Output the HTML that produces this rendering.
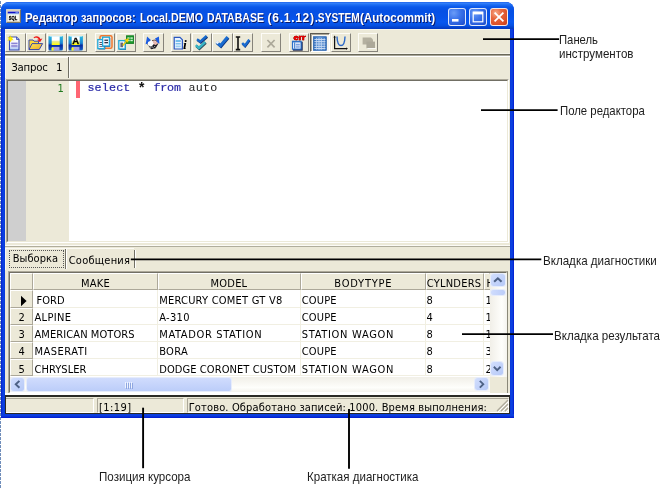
<!DOCTYPE html>
<html lang="ru"><head><meta charset="utf-8"><title>Редактор запросов</title>
<style>
html,body{margin:0;padding:0;background:#fff;}
body{width:662px;height:488px;position:relative;overflow:hidden;font-family:"DejaVu Sans Condensed","Liberation Sans",sans-serif;}
.r{position:absolute;display:block;}
.t{position:absolute;white-space:pre;line-height:0;}
#root{position:absolute;left:0;top:0;width:662px;height:488px;will-change:transform;}
</style></head><body><div id="root">
<div class="r" style="left:0px;top:0px;width:1px;height:488px;background:repeating-linear-gradient(to bottom,#fff 0 1px,#6f8dba 1px 4px);"></div>
<div class="r" style="left:1px;top:2px;width:513px;height:415.5px;background:#0a38d6;border-radius:8px 8px 0 0;background:linear-gradient(to right,#0019cf 0,#0831d9 1px,#0c44e2 2px,#0838da 4px,#0838da calc(100% - 4px),#0c44e2 calc(100% - 2px),#0831d9 calc(100% - 1px),#0019cf 100%);"></div>
<div class="r" style="left:1px;top:414px;width:513px;height:3.5px;background:linear-gradient(to bottom,#0838da 0,#0c44e2 1px,#0831d9 2.5px,#0019cf 100%)"></div>
<div class="r" style="left:1px;top:2px;width:513px;height:27px;border-radius:8px 8px 0 0;background:linear-gradient(to bottom,#1358ea 0,#3a84f8 1px,#2070f4 2.5px,#0a58ea 5px,#0650e4 9px,#0652e8 15px,#0858f0 20px,#0650e2 23.5px,#0442cc 25.5px,#0338c0 27px);"></div>
<div class="r" style="left:5px;top:29px;width:505px;height:385px;background:#ece9d8;"></div>
<div class="r" style="left:5px;top:29px;width:505px;height:1px;background:#f7f5ea;"></div>
<svg class="r" style="left:6px;top:9px" width="15" height="14" viewBox="0 0 15 14"><rect x=".5" y=".3" width="14" height="13.2" fill="#d8d0b8"/><path d="M14.5 .3 V13.5 H.5" fill="none" stroke="#7c7464" stroke-width="1"/><path d="M.5 13.5 V.3 H14.5" fill="none" stroke="#e8e2d0" stroke-width=".8"/><rect x="1.7" y="2.2" width="11.2" height="9.8" fill="#fbfaf2"/><rect x="1.7" y="2.6" width="11.2" height="2" fill="#1010c4"/><rect x="1.7" y="4.6" width="11.2" height=".8" fill="#a8d8f0"/><rect x="9.4" y="3.2" width="3" height=".9" fill="#7a9cf0"/><text x="2.8" y="10.9" font-family="Liberation Sans, sans-serif" font-weight="700" font-size="5.9" fill="#000" textLength="8.4" lengthAdjust="spacingAndGlyphs" stroke="#000" stroke-width=".3">SQL</text></svg>
<span class="t" style="left:24.50px;top:18px;font:700 12px/0 'Liberation Sans',sans-serif;color:#fff;text-shadow:1px 1px 0 #0a1a6a;transform:scaleX(0.9535);transform-origin:0 50%;">Редактор</span>
<span class="t" style="left:81.20px;top:18px;font:700 12px/0 'Liberation Sans',sans-serif;color:#fff;text-shadow:1px 1px 0 #0a1a6a;transform:scaleX(0.9193);transform-origin:0 50%;">запросов:</span>
<span class="t" style="left:140.00px;top:18px;font:700 12px/0 'Liberation Sans',sans-serif;color:#fff;text-shadow:1px 1px 0 #0a1a6a;transform:scaleX(0.8912);transform-origin:0 50%;">Local.DEMO</span>
<span class="t" style="left:207.00px;top:18px;font:700 12px/0 'Liberation Sans',sans-serif;color:#fff;text-shadow:1px 1px 0 #0a1a6a;transform:scaleX(0.8784);transform-origin:0 50%;">DATABASE</span>
<span class="t" style="left:267.60px;top:18px;font:700 12px/0 'Liberation Sans',sans-serif;color:#fff;letter-spacing:0.720px;text-shadow:1px 1px 0 #0a1a6a;">(6.1.12)</span>
<span class="t" style="left:315.00px;top:18px;font:700 12px/0 'Liberation Sans',sans-serif;color:#fff;text-shadow:1px 1px 0 #0a1a6a;transform:scaleX(0.8503);transform-origin:0 50%;">.SYSTEM</span>
<span class="t" style="left:360.30px;top:18px;font:700 12px/0 'Liberation Sans',sans-serif;color:#fff;text-shadow:1px 1px 0 #0a1a6a;transform:scaleX(0.9641);transform-origin:0 50%;">(Autocommit)</span>
<div class="r" style="left:448.3px;top:7.5px;width:18.0px;height:18.0px;box-sizing:border-box;border:1px solid rgba(255,255,255,.85);border-radius:3px;background:radial-gradient(circle at 30% 25%,#6a9cf8 0,#3c74ea 40%,#2458d8 80%,#1c48c0 100%);"><svg width="18" height="18" viewBox="0 0 18 18" style="position:absolute;left:-1px;top:-1px"><rect x="4" y="11" width="6.5" height="2.6" fill="#fff"/></svg></div>
<div class="r" style="left:469px;top:7.5px;width:18px;height:18.0px;box-sizing:border-box;border:1px solid rgba(255,255,255,.85);border-radius:3px;background:radial-gradient(circle at 30% 25%,#6a9cf8 0,#3c74ea 40%,#2458d8 80%,#1c48c0 100%);"><svg width="18" height="18" viewBox="0 0 18 18" style="position:absolute;left:-1px;top:-1px"><rect x="4.2" y="4.2" width="9.6" height="9.6" fill="none" stroke="#fff" stroke-width="1.2"/><rect x="4" y="3.8" width="10" height="2.6" fill="#fff"/></svg></div>
<div class="r" style="left:489.8px;top:7.5px;width:18.0px;height:18.0px;box-sizing:border-box;border:1px solid rgba(255,255,255,.85);border-radius:3px;background:radial-gradient(circle at 30% 25%,#f6ac8c 0,#e9683e 35%,#da4e26 75%,#c23a16 100%);"><svg width="18" height="18" viewBox="0 0 18 18" style="position:absolute;left:-1px;top:-1px"><path d="M4.6 4.6 L13.4 13.4 M13.4 4.6 L4.6 13.4" stroke="#fff" stroke-width="1.8" stroke-linecap="butt"/></svg></div>
<div class="r" style="left:5px;top:53px;width:505px;height:4px;background:linear-gradient(to bottom,#f5f3e9 0 1px,#6a685a 1px 2px,#a9a799 2px 3px,#fff 3px 4px)"></div>
<div class="r" style="left:5px;top:57px;width:63px;height:1px;background:#fbfaf4;"></div>
<div class="r" style="left:5px;top:57px;width:1px;height:21px;background:#fbfaf4;"></div>
<div class="r" style="left:5.3px;top:32.5px;width:20.4px;height:19.799999999999997px;background:#ece9d8;box-sizing:border-box;border:1px solid;border-color:#fdfcf7 #86837a #86837a #fdfcf7;"><svg width="20" height="19" viewBox="0 0 20 19" style="position:absolute;left:-1px;top:-1px"><defs>
<linearGradient id="gdoc" x1="0" y1="0" x2="0" y2="1"><stop offset="0" stop-color="#fff"/><stop offset=".6" stop-color="#f4f6ff"/><stop offset="1" stop-color="#a8c8f4"/></linearGradient>
<linearGradient id="gflop" x1="0" y1="0" x2="0" y2="1"><stop offset="0" stop-color="#2cbce0"/><stop offset=".5" stop-color="#1a84d4"/><stop offset=".64" stop-color="#082c9c"/><stop offset=".78" stop-color="#0a3cb0"/><stop offset="1" stop-color="#1666c6"/></linearGradient>
<linearGradient id="glab" x1="0" y1="0" x2="0" y2="1"><stop offset="0" stop-color="#fff"/><stop offset=".45" stop-color="#fff"/><stop offset=".6" stop-color="#e8e890"/><stop offset="1" stop-color="#ffff00"/></linearGradient>
<linearGradient id="gfold" x1="0" y1="0" x2="1" y2="1"><stop offset="0" stop-color="#ffe860"/><stop offset="1" stop-color="#e8a820"/></linearGradient>
</defs><path d="M4.5 4 H11.5 L14 6.5 V17 H4.5 Z" fill="url(#gdoc)" stroke="#3c4cb4" stroke-width="1.1"/>
<path d="M11.5 4 V6.5 H14" fill="#9ab0ea" stroke="#3c4cb4" stroke-width=".8"/>
<rect x="6.2" y="9.6" width="6.4" height="1.5" fill="#8a84d4"/><rect x="6.2" y="11.8" width="6.4" height="2.4" fill="#9c98dc"/>
<path d="M5.2 2.6 L6 4.6 L8 4 L6.9 5.7 L8.3 7 L6.4 7 L5.6 8.9 L4.9 7.1 L2.8 7.4 L4.2 6 L2.9 4.3 L4.7 4.6 Z" fill="#ffee00" stroke="#e8d000" stroke-width=".4"/></svg></div>
<div class="r" style="left:25.9px;top:32.5px;width:20.4px;height:19.799999999999997px;background:#ece9d8;box-sizing:border-box;border:1px solid;border-color:#fdfcf7 #86837a #86837a #fdfcf7;"><svg width="20" height="19" viewBox="0 0 20 19" style="position:absolute;left:-1px;top:-1px"><path d="M3 7 H7 L8 8.2 H12.5 V16.5 H3 Z" fill="#ffd838" stroke="#3a48a8" stroke-width="1"/>
<path d="M3 16.6 L6 10.6 H16.6 L13.2 16.6 Z" fill="url(#gfold)" stroke="#3a48a8" stroke-width="1"/>
<path d="M7.5 4.6 C10 2.4 13.4 3.2 14.4 6 L16.4 5.6 L14 9.2 L11 6.8 L12.8 6.4 C12 4.8 10 4.4 8.2 5.2 Z" fill="#ee1c1c"/></svg></div>
<div class="r" style="left:46.5px;top:32.5px;width:20.400000000000006px;height:19.799999999999997px;background:#ece9d8;box-sizing:border-box;border:1px solid;border-color:#fdfcf7 #86837a #86837a #fdfcf7;"><svg width="20" height="19" viewBox="0 0 20 19" style="position:absolute;left:-1px;top:-1px"><g transform="translate(-0.9,0)"><path d="M3.2 2.9 H16 Q16.8 2.9 16.8 3.7 V16 Q16.8 17.5 15.3 17.5 H3.9 Q2.4 17.5 2.4 16 V3.7 Q2.4 2.9 3.2 2.9 Z" fill="url(#gflop)"/>
<rect x="5.6" y="3.1" width="8" height="8.9" fill="url(#glab)"/><rect x="3.4" y="2.9" width="12.4" height=".9" fill="#d8f4fc" opacity=".8"/>
<rect x="5.8" y="13.9" width="7.6" height="3.6" fill="#a8a4dc"/><rect x="5.4" y="14.6" width="2" height="2.9" fill="#ffff00"/></g></svg></div>
<div class="r" style="left:67.1px;top:32.5px;width:20.400000000000006px;height:19.799999999999997px;background:#ece9d8;box-sizing:border-box;border:1px solid;border-color:#fdfcf7 #86837a #86837a #fdfcf7;"><svg width="20" height="19" viewBox="0 0 20 19" style="position:absolute;left:-1px;top:-1px"><g transform="translate(-0.9,0)"><path d="M3.2 2.9 H16 Q16.8 2.9 16.8 3.7 V16 Q16.8 17.5 15.3 17.5 H3.9 Q2.4 17.5 2.4 16 V3.7 Q2.4 2.9 3.2 2.9 Z" fill="url(#gflop)"/>
<rect x="5.6" y="3.1" width="8" height="8.9" fill="url(#glab)"/><rect x="3.4" y="2.9" width="12.4" height=".9" fill="#d8f4fc" opacity=".8"/>
<rect x="5.8" y="13.9" width="7.6" height="3.6" fill="#a8a4dc"/><rect x="5.4" y="14.6" width="2" height="2.9" fill="#ffff00"/><text x="9.7" y="10.7" font-family="Liberation Sans, sans-serif" font-weight="700" font-size="9.5" text-anchor="middle" fill="#000" stroke="#000" stroke-width=".3">A</text></g></svg></div>
<div class="r" style="left:94.9px;top:32.5px;width:20.400000000000006px;height:19.799999999999997px;background:#ece9d8;box-sizing:border-box;border:1px solid;border-color:#fdfcf7 #86837a #86837a #fdfcf7;"><svg width="20" height="19" viewBox="0 0 20 19" style="position:absolute;left:-1px;top:-1px"><rect x="5" y="2.7" width="12" height="12.6" rx="1.6" fill="none" stroke="#f07830" stroke-width="1.5"/>
<rect x="3.6" y="7.4" width="6.6" height="9" fill="#243070"/><rect x="2.8" y="6.6" width="6.6" height="9" fill="#f2f6ff" stroke="#20a8d8" stroke-width="1.3"/>
<rect x="4.4" y="9" width="3.4" height="1" fill="#556"/><rect x="4.4" y="11" width="3.4" height="1" fill="#556"/><rect x="4.4" y="13" width="3.4" height="1" fill="#778"/>
<rect x="8.4" y="5" width="6.8" height="8.8" fill="#243070"/><rect x="7.6" y="4.2" width="6.8" height="8.8" fill="#f2f6ff" stroke="#20a8d8" stroke-width="1.3"/>
<rect x="9.4" y="6.6" width="3.6" height="1.3" fill="#334"/><rect x="9.4" y="9" width="3.6" height="1.3" fill="#334"/></svg></div>
<div class="r" style="left:115.5px;top:32.5px;width:20.400000000000006px;height:19.799999999999997px;background:#ece9d8;box-sizing:border-box;border:1px solid;border-color:#fdfcf7 #86837a #86837a #fdfcf7;"><svg width="20" height="19" viewBox="0 0 20 19" style="position:absolute;left:-1px;top:-1px"><rect x="10.4" y="2.8" width="7.2" height="7.6" fill="#1c9a2c" stroke="#0c7a1c" stroke-width=".8"/>
<rect x="11.4" y="4.4" width="2.2" height="1.4" fill="#d8f4d8"/><rect x="14.4" y="4.4" width="2.4" height="1.4" fill="#d8f4d8"/><rect x="11.4" y="6.8" width="2.2" height="1.4" fill="#d8f4d8"/><rect x="14.4" y="6.8" width="2.4" height="1.4" fill="#d8f4d8"/>
<rect x="3.6" y="8.4" width="6.4" height="8.4" fill="#243070"/><rect x="2.8" y="7.6" width="6.4" height="8.4" fill="#f2f6ff" stroke="#20a8d8" stroke-width="1.3"/>
<rect x="4.4" y="9.6" width="2.6" height="4.6" fill="#667"/>
<path d="M6.4 12 L10 8 L8.6 6.8 L12.6 5.4 L11.8 9.6 L10.8 8.6 L7.4 12.8 Z" fill="#ffe000" stroke="#c8a800" stroke-width=".4"/></svg></div>
<div class="r" style="left:143.3px;top:32.5px;width:20.400000000000006px;height:19.799999999999997px;background:#ece9d8;box-sizing:border-box;border:1px solid;border-color:#fdfcf7 #86837a #86837a #fdfcf7;"><svg width="20" height="19" viewBox="0 0 20 19" style="position:absolute;left:-1px;top:-1px"><path d="M2.6 11.3 L4.1 3.4 L7.8 6.9 L5.4 10.6 Z" fill="#1c5ce0"/><path d="M16.4 10.8 L15.9 3.4 L12 5.4 L14.2 9.6 Z" fill="#1c5ce0"/>
<path d="M4.4 11.4 L9 8 L15.4 10.4 L12.6 15.2 L8.2 16.3 Z" fill="#16161c"/>
<path d="M5 8.9 L9 7.3 L11.6 10.2 L8.6 13.6 L5 12.4 Z" fill="#fafafa"/><path d="M9.6 7.7 L13.9 8.7 L14.9 10.8 L12 12.3 L10.4 10.2 Z" fill="#e8b8b0"/>
<path d="M9 7.6 L12 7 L13.8 8.4" stroke="#503030" stroke-width=".8" fill="none"/>
<path d="M6.6 13.4 L8.4 14.6 M9.2 13.8 L10.6 15 M11.4 13.2 L12.2 14.2" stroke="#e8e8ee" stroke-width=".9" fill="none"/></svg></div>
<div class="r" style="left:171.1px;top:32.5px;width:20.400000000000006px;height:19.799999999999997px;background:#ece9d8;box-sizing:border-box;border:1px solid;border-color:#fdfcf7 #86837a #86837a #fdfcf7;"><svg width="20" height="19" viewBox="0 0 20 19" style="position:absolute;left:-1px;top:-1px"><path d="M3.2 4.4 H9 L11.4 6.8 V16 H3.2 Z" fill="#e8f2ff" stroke="#2a58c0" stroke-width="1.2"/>
<rect x="4.6" y="7.2" width="5.2" height="1.6" fill="#58b0e8"/><rect x="4.6" y="10" width="5.2" height="1.4" fill="#78c0ec"/><rect x="4.6" y="12.6" width="5.2" height="1.6" fill="#98d0f0"/>
<text x="12" y="15.6" font-family="Liberation Serif, serif" font-weight="700" font-style="italic" font-size="13.5" fill="#000">i</text></svg></div>
<div class="r" style="left:191.7px;top:32.5px;width:20.400000000000006px;height:19.799999999999997px;background:#ece9d8;box-sizing:border-box;border:1px solid;border-color:#fdfcf7 #86837a #86837a #fdfcf7;"><svg width="20" height="19" viewBox="0 0 20 19" style="position:absolute;left:-1px;top:-1px"><path d="M4.4 13 L7.4 15.8 L13.8 9.8" fill="none" stroke="#2a4858" stroke-width="2.6"/><path d="M3.8 12.2 L6.8 15 L13.2 9" fill="none" stroke="#38b4c4" stroke-width="2.4"/>
<path d="M5.6 7 L8.8 9.4 L15.2 3.8" fill="none" stroke="#10306c" stroke-width="2.6"/><path d="M5 6.2 L8.2 8.6 L14.6 3" fill="none" stroke="#1668cc" stroke-width="2.4"/></svg></div>
<div class="r" style="left:212.3px;top:32.5px;width:20.400000000000006px;height:19.799999999999997px;background:#ece9d8;box-sizing:border-box;border:1px solid;border-color:#fdfcf7 #86837a #86837a #fdfcf7;"><svg width="20" height="19" viewBox="0 0 20 19" style="position:absolute;left:-1px;top:-1px"><path d="M5 9.8 L9 13.4 L16.2 4.8" fill="none" stroke="#0c3480" stroke-width="3"/><path d="M4.4 9 L8.4 12.6 L15.6 4" fill="none" stroke="#1a6cd0" stroke-width="3"/><path d="M3.4 9.6 L5.4 7.8 L7.2 9.6 L5.4 11.2 Z" fill="#fff" opacity=".9"/></svg></div>
<div class="r" style="left:232.9px;top:32.5px;width:20.400000000000006px;height:19.799999999999997px;background:#ece9d8;box-sizing:border-box;border:1px solid;border-color:#fdfcf7 #86837a #86837a #fdfcf7;"><svg width="20" height="19" viewBox="0 0 20 19" style="position:absolute;left:-1px;top:-1px"><path d="M2.8 4 H7.2 M2.8 16.6 H7.2 M5 4 V16.6" stroke="#111" stroke-width="1.6" fill="none"/>
<path d="M9.6 10.6 L12.2 13.2 L16.6 7.2" fill="none" stroke="#0c3480" stroke-width="2.4"/><path d="M9.2 10 L11.8 12.6 L16.2 6.6" fill="none" stroke="#1a6cd0" stroke-width="2.4"/></svg></div>
<div class="r" style="left:260.7px;top:32.5px;width:20.399999999999977px;height:19.799999999999997px;background:#ece9d8;box-sizing:border-box;border:1px solid;border-color:#fdfcf7 #86837a #86837a #fdfcf7;"><svg width="20" height="19" viewBox="0 0 20 19" style="position:absolute;left:-1px;top:-1px"><path d="M6.4 7 L13.6 14.4 M13.6 7 L6.4 14.4" stroke="#aca899" stroke-width="1.7" fill="none"/></svg></div>
<div class="r" style="left:288.9px;top:32.5px;width:20.399999999999977px;height:19.799999999999997px;background:#ece9d8;box-sizing:border-box;border:1px solid;border-color:#fdfcf7 #86837a #86837a #fdfcf7;"><svg width="20" height="19" viewBox="0 0 20 19" style="position:absolute;left:-1px;top:-1px"><rect x="3.9" y="8.7" width="9.8" height="9" fill="#1c2450"/><rect x="2.9" y="7.7" width="9.8" height="9" fill="#2a70c8"/>
<rect x="4.1" y="9.4" width="7.4" height="6.2" fill="#f0f5ff"/><rect x="5.2" y="9.4" width="1" height="6.2" fill="#2a70c8"/><rect x="6.8" y="10.8" width="4" height="1" fill="#5a8cd8"/><rect x="6.8" y="12.6" width="4" height="1" fill="#5a8cd8"/><rect x="6.8" y="14.2" width="4" height=".8" fill="#8ab0e8"/>
<text x="4.4" y="7.3" style="filter:drop-shadow(.8px .8px 0 #200)" font-family="Liberation Sans, sans-serif" font-weight="700" font-size="7.4" fill="#f00000" stroke="#f00000" stroke-width=".4" textLength="12.3" lengthAdjust="spacingAndGlyphs">err</text></svg></div>
<div class="r" style="left:309.9px;top:32.5px;width:20.399999999999977px;height:19.799999999999997px;background:#ece9d8;box-sizing:border-box;border:1px solid;border-color:#5c5a50 #fff #fff #5c5a50;background:#f8f7f1;box-shadow:inset 1px 1px 0 #aca899;"><svg width="20" height="19" viewBox="0 0 20 19" style="position:absolute;left:-1px;top:-1px"><defs><linearGradient id="ggrid" x1="0" y1="0" x2="1" y2="0"><stop offset="0" stop-color="#2a68b8"/><stop offset=".5" stop-color="#6a9cd8"/><stop offset="1" stop-color="#2a68b8"/></linearGradient></defs><rect x="3.4" y="3.7" width="13" height="13.8" fill="url(#ggrid)" stroke="#1c58a8" stroke-width=".6"/><rect x="4.4" y="6.0" width="11" height=".8" fill="#e4eefc"/><rect x="4.4" y="8.3" width="11" height=".8" fill="#e4eefc"/><rect x="4.4" y="10.6" width="11" height=".8" fill="#e4eefc"/><rect x="4.4" y="12.9" width="11" height=".8" fill="#e4eefc"/><rect x="4.4" y="15.2" width="11" height=".8" fill="#e4eefc"/><rect x="6.0" y="5" width=".7" height="11.6" fill="#c4d8f4"/><rect x="8.6" y="5" width=".7" height="11.6" fill="#c4d8f4"/><rect x="11.2" y="5" width=".7" height="11.6" fill="#c4d8f4"/><rect x="13.8" y="5" width=".7" height="11.6" fill="#c4d8f4"/></svg></div>
<div class="r" style="left:330.5px;top:32.5px;width:20.399999999999977px;height:19.799999999999997px;background:#ece9d8;box-sizing:border-box;border:1px solid;border-color:#fdfcf7 #86837a #86837a #fdfcf7;"><svg width="20" height="19" viewBox="0 0 20 19" style="position:absolute;left:-1px;top:-1px"><path d="M3.6 3.6 V15.6 H16" stroke="#111" stroke-width="1.2" fill="none"/><path d="M3.6 2.6 L2.4 4.6 H4.8 Z M17 15.6 L15 14.4 V16.8 Z" fill="#111"/>
<path d="M6 3.4 C6.4 15.6 13.6 15.6 14 3.4" stroke="#2a68c8" stroke-width="1.4" fill="none"/></svg></div>
<div class="r" style="left:357.9px;top:32.5px;width:20.399999999999977px;height:19.799999999999997px;background:#ece9d8;box-sizing:border-box;border:1px solid;border-color:#fdfcf7 #86837a #86837a #fdfcf7;"><svg width="20" height="19" viewBox="0 0 20 19" style="position:absolute;left:-1px;top:-1px"><path d="M4.6 4.6 H13 L15 6.6 V11.6 H4.6 Z" fill="#b4b0a0"/><path d="M8.4 8.6 H17 V15.2 H8.4 Z" fill="#aca899"/><path d="M9.4 15.2 H18 V16 H9.4 Z" fill="#fff"/></svg></div>
<span class="t" style="left:11.30px;top:68px;font:400 11.3px/0 'DejaVu Sans Condensed',sans-serif;color:#000;letter-spacing:-0.211px;">Запрос</span>
<span class="t" style="left:56.00px;top:68px;font:400 11.3px/0 'DejaVu Sans Condensed',sans-serif;color:#000;">1</span>
<div class="r" style="left:68px;top:57px;width:1px;height:21px;background:#716f64;"></div>
<div class="r" style="left:69px;top:57px;width:1px;height:21px;background:#fbfaf4;"></div>
<div class="r" style="left:6px;top:79px;width:503px;height:164px;box-sizing:border-box;border:1px solid;border-color:#aca899 #fff #fff #aca899;"></div>
<div class="r" style="left:7px;top:80px;width:501px;height:162px;background:#fff;box-sizing:border-box;border:1px solid;border-color:#716f64 #ece9d8 #ece9d8 #716f64;"></div>
<div class="r" style="left:8px;top:81px;width:18px;height:160px;background:#cfcfcf;"></div>
<div class="r" style="left:26px;top:81px;width:42.5px;height:160px;background:#ece9d8;"></div>
<span class="t" style="left:57.60px;top:89px;font:400 11px/0 'DejaVu Sans Condensed',sans-serif;color:#1f7a1f;">1</span>
<div class="r" style="left:76.3px;top:81.3px;width:3.5px;height:16.299999999999997px;background:#ff6674;"></div>
<span class="t" style="left:87.40px;top:88px;font:400 11.7px/0 'Liberation Mono',monospace;color:#2b2ba8;letter-spacing:0.181px;-webkit-text-stroke:.2px #2b2ba8;">select</span>
<span class="t" style="left:137.60px;top:89px;font:700 14px/0 'Liberation Mono',monospace;color:#111;">*</span>
<span class="t" style="left:153.40px;top:88px;font:400 11.7px/0 'Liberation Mono',monospace;color:#2b2ba8;letter-spacing:-0.154px;-webkit-text-stroke:.2px #2b2ba8;">from</span>
<span class="t" style="left:188.40px;top:88px;font:400 11.7px/0 'Liberation Mono',monospace;color:#222;letter-spacing:0.312px;">auto</span>
<div class="r" style="left:5px;top:245px;width:505px;height:1px;background:#fcfbf6;"></div>
<div class="r" style="left:5px;top:246px;width:505px;height:1px;background:#b0ad9c;"></div>
<div class="r" style="left:6px;top:248px;width:128px;height:1px;background:#fbfaf4;"></div>
<div class="r" style="left:5px;top:248px;width:1px;height:22px;background:#fbfaf4;"></div>
<div class="r" style="left:9px;top:250px;width:55px;height:18px;box-sizing:border-box;border:1px dotted #555;"></div>
<span class="t" style="left:12.80px;top:259px;font:400 11px/0 'DejaVu Sans Condensed',sans-serif;color:#000;letter-spacing:0.018px;">Выборка</span>
<div class="r" style="left:64.5px;top:249px;width:1.0px;height:20px;background:#716f64;"></div>
<div class="r" style="left:65.5px;top:249px;width:1.0px;height:20px;background:#fff;"></div>
<span class="t" style="left:68.70px;top:261px;font:400 11px/0 'DejaVu Sans Condensed',sans-serif;color:#000;letter-spacing:0.239px;">Сообщения</span>
<div class="r" style="left:134px;top:250px;width:1px;height:18px;background:#716f64;"></div>
<div class="r" style="left:135px;top:250px;width:1px;height:18px;background:#fff;"></div>
<div class="r" style="left:8px;top:271px;width:500px;height:123px;box-sizing:border-box;border:1px solid;border-color:#aca899 #8a8878 #fff #aca899;"></div>
<div class="r" style="left:9px;top:272px;width:498px;height:121px;background:#fff;box-sizing:border-box;border:1px solid;border-color:#716f64 #fff #fff #716f64;"></div>
<div class="r" style="left:10px;top:273px;width:23px;height:17.399999999999977px;background:#ece9d8;box-sizing:border-box;border:1px solid;border-color:#fff #aca899 #aca899 #fff;"></div>
<div class="r" style="left:33px;top:273px;width:124.5px;height:17.399999999999977px;background:#ece9d8;box-sizing:border-box;border:1px solid;border-color:#fff #aca899 #aca899 #fff;"></div>
<div class="r" style="left:157.5px;top:273px;width:143.0px;height:17.399999999999977px;background:#ece9d8;box-sizing:border-box;border:1px solid;border-color:#fff #aca899 #aca899 #fff;"></div>
<div class="r" style="left:300.5px;top:273px;width:125.0px;height:17.399999999999977px;background:#ece9d8;box-sizing:border-box;border:1px solid;border-color:#fff #aca899 #aca899 #fff;"></div>
<div class="r" style="left:425.5px;top:273px;width:58.5px;height:17.399999999999977px;background:#ece9d8;box-sizing:border-box;border:1px solid;border-color:#fff #aca899 #aca899 #fff;"></div>
<div class="r" style="left:484px;top:273px;width:6px;height:17.399999999999977px;background:#ece9d8;box-sizing:border-box;border:1px solid;border-color:#fff #aca899 #aca899 #fff;"></div>
<div class="r" style="left:10px;top:290.4px;width:23px;height:17.200000000000045px;background:#ece9d8;box-sizing:border-box;border:1px solid;border-color:#fff #aca899 #aca899 #fff;"></div>
<div class="r" style="left:10px;top:307.6px;width:23px;height:17.19999999999999px;background:#ece9d8;box-sizing:border-box;border:1px solid;border-color:#fff #aca899 #aca899 #fff;"></div>
<div class="r" style="left:10px;top:324.8px;width:23px;height:17.19999999999999px;background:#ece9d8;box-sizing:border-box;border:1px solid;border-color:#fff #aca899 #aca899 #fff;"></div>
<div class="r" style="left:10px;top:342px;width:23px;height:17.19999999999999px;background:#ece9d8;box-sizing:border-box;border:1px solid;border-color:#fff #aca899 #aca899 #fff;"></div>
<div class="r" style="left:10px;top:359.2px;width:23px;height:17.19999999999999px;background:#ece9d8;box-sizing:border-box;border:1px solid;border-color:#fff #aca899 #aca899 #fff;"></div>
<div class="r" style="left:33px;top:306.6px;width:457px;height:1.0px;background:#f1efe2;"></div>
<div class="r" style="left:33px;top:323.8px;width:457px;height:1.0px;background:#f1efe2;"></div>
<div class="r" style="left:33px;top:341px;width:457px;height:1px;background:#f1efe2;"></div>
<div class="r" style="left:33px;top:358.2px;width:457px;height:1.0px;background:#f1efe2;"></div>
<div class="r" style="left:33px;top:375.4px;width:457px;height:1.0px;background:#f1efe2;"></div>
<div class="r" style="left:156.5px;top:290px;width:1.0px;height:86.39999999999998px;background:#f1efe2;"></div>
<div class="r" style="left:299.5px;top:290px;width:1.0px;height:86.39999999999998px;background:#f1efe2;"></div>
<div class="r" style="left:424.5px;top:290px;width:1.0px;height:86.39999999999998px;background:#f1efe2;"></div>
<div class="r" style="left:483px;top:290px;width:1px;height:86.39999999999998px;background:#f1efe2;"></div>
<span class="t" style="left:80.90px;top:284px;font:400 11px/0 'DejaVu Sans Condensed',sans-serif;color:#000;letter-spacing:0.312px;">MAKE</span>
<span class="t" style="left:210.60px;top:284px;font:400 11px/0 'DejaVu Sans Condensed',sans-serif;color:#000;letter-spacing:0.195px;">MODEL</span>
<span class="t" style="left:334.30px;top:284px;font:400 11px/0 'DejaVu Sans Condensed',sans-serif;color:#000;letter-spacing:0.791px;">BODYTYPE</span>
<span class="t" style="left:426.70px;top:284px;font:400 11px/0 'DejaVu Sans Condensed',sans-serif;color:#000;letter-spacing:0.240px;">CYLNDERS</span>
<div class="r" style="left:485px;top:274px;width:5px;height:15px;background:#ece9d8;overflow:hidden"><span class="t" style="left:1.50px;top:10px;font:400 11px/0 'DejaVu Sans Condensed',sans-serif;color:#000;">H</span></div>
<span class="t" style="left:36.40px;top:301px;font:400 11px/0 'DejaVu Sans Condensed',sans-serif;color:#000;letter-spacing:0.072px;">FORD</span>
<span class="t" style="left:159.20px;top:301px;font:400 11px/0 'DejaVu Sans Condensed',sans-serif;color:#000;letter-spacing:0.231px;">MERCURY COMET GT V8</span>
<span class="t" style="left:301.80px;top:301px;font:400 11px/0 'DejaVu Sans Condensed',sans-serif;color:#000;letter-spacing:0.132px;">COUPE</span>
<span class="t" style="left:426.50px;top:301px;font:400 11px/0 'DejaVu Sans Condensed',sans-serif;color:#000;">8</span>
<div class="r" style="left:485px;top:291px;width:5px;height:15px;overflow:hidden"><span class="t" style="left:0.50px;top:10px;font:400 11px/0 'DejaVu Sans Condensed',sans-serif;color:#000;">1</span></div>
<span class="t" style="left:34.50px;top:318px;font:400 11px/0 'DejaVu Sans Condensed',sans-serif;color:#000;letter-spacing:0.334px;">ALPINE</span>
<span class="t" style="left:159.20px;top:318px;font:400 11px/0 'DejaVu Sans Condensed',sans-serif;color:#000;letter-spacing:0.329px;">A-310</span>
<span class="t" style="left:301.80px;top:318px;font:400 11px/0 'DejaVu Sans Condensed',sans-serif;color:#000;letter-spacing:0.132px;">COUPE</span>
<span class="t" style="left:426.50px;top:318px;font:400 11px/0 'DejaVu Sans Condensed',sans-serif;color:#000;">4</span>
<div class="r" style="left:485px;top:308px;width:5px;height:15px;overflow:hidden"><span class="t" style="left:0.50px;top:10px;font:400 11px/0 'DejaVu Sans Condensed',sans-serif;color:#000;">1</span></div>
<span class="t" style="left:18.50px;top:318px;font:400 11px/0 'DejaVu Sans Condensed',sans-serif;color:#000;">2</span>
<span class="t" style="left:34.50px;top:335px;font:400 11px/0 'DejaVu Sans Condensed',sans-serif;color:#000;letter-spacing:0.085px;">AMERICAN MOTORS</span>
<span class="t" style="left:159.20px;top:335px;font:400 11px/0 'DejaVu Sans Condensed',sans-serif;color:#000;letter-spacing:0.652px;">MATADOR STATION</span>
<span class="t" style="left:301.80px;top:335px;font:400 11px/0 'DejaVu Sans Condensed',sans-serif;color:#000;letter-spacing:0.692px;">STATION WAGON</span>
<span class="t" style="left:426.50px;top:335px;font:400 11px/0 'DejaVu Sans Condensed',sans-serif;color:#000;">8</span>
<div class="r" style="left:485px;top:325px;width:5px;height:16px;overflow:hidden"><span class="t" style="left:0.50px;top:10px;font:400 11px/0 'DejaVu Sans Condensed',sans-serif;color:#000;">1</span></div>
<span class="t" style="left:18.50px;top:335px;font:400 11px/0 'DejaVu Sans Condensed',sans-serif;color:#000;">3</span>
<span class="t" style="left:34.50px;top:352px;font:400 11px/0 'DejaVu Sans Condensed',sans-serif;color:#000;letter-spacing:0.492px;">MASERATI</span>
<span class="t" style="left:159.20px;top:352px;font:400 11px/0 'DejaVu Sans Condensed',sans-serif;color:#000;letter-spacing:0.302px;">BORA</span>
<span class="t" style="left:301.80px;top:352px;font:400 11px/0 'DejaVu Sans Condensed',sans-serif;color:#000;letter-spacing:0.132px;">COUPE</span>
<span class="t" style="left:426.50px;top:352px;font:400 11px/0 'DejaVu Sans Condensed',sans-serif;color:#000;">8</span>
<div class="r" style="left:485px;top:343px;width:5px;height:15px;overflow:hidden"><span class="t" style="left:0.50px;top:9px;font:400 11px/0 'DejaVu Sans Condensed',sans-serif;color:#000;">3</span></div>
<span class="t" style="left:18.50px;top:352px;font:400 11px/0 'DejaVu Sans Condensed',sans-serif;color:#000;">4</span>
<span class="t" style="left:34.50px;top:370px;font:400 11px/0 'DejaVu Sans Condensed',sans-serif;color:#000;letter-spacing:0.057px;">CHRYSLER</span>
<span class="t" style="left:159.20px;top:370px;font:400 11px/0 'DejaVu Sans Condensed',sans-serif;color:#000;letter-spacing:0.088px;">DODGE CORONET CUSTOM</span>
<span class="t" style="left:301.80px;top:370px;font:400 11px/0 'DejaVu Sans Condensed',sans-serif;color:#000;letter-spacing:0.692px;">STATION WAGON</span>
<span class="t" style="left:426.50px;top:370px;font:400 11px/0 'DejaVu Sans Condensed',sans-serif;color:#000;">8</span>
<div class="r" style="left:485px;top:360px;width:5px;height:15px;overflow:hidden"><span class="t" style="left:0.50px;top:10px;font:400 11px/0 'DejaVu Sans Condensed',sans-serif;color:#000;">2</span></div>
<span class="t" style="left:18.50px;top:370px;font:400 11px/0 'DejaVu Sans Condensed',sans-serif;color:#000;">5</span>
<svg class="r" style="left:20px;top:295px" width="8" height="12" viewBox="0 0 8 12"><path d="M1 0.8 L6.6 6 L1 11.2 Z" fill="#000"/></svg>
<div class="r" style="left:490px;top:273px;width:16.5px;height:104px;background:linear-gradient(to right,#f1efe8,#fefefb 70%,#f4f3ee)"></div>
<div class="r" style="left:10px;top:377px;width:480px;height:15px;background:linear-gradient(to bottom,#f1efe8,#fefefb 70%,#f4f3ee)"></div>
<div class="r" style="left:490px;top:377px;width:16.5px;height:15.5px;background:#ece9d8;"></div>
<div class="r" style="left:491px;top:274px;width:13.699999999999989px;height:12.300000000000011px;border-radius:2.5px;background:linear-gradient(135deg,#d2defd,#b6c9f7);box-shadow:0 0 0 1px #e6ecfb;"><svg width="13.699999999999989" height="12.300000000000011" viewBox="0 0 14 14" preserveAspectRatio="none" style="position:absolute;left:0;top:0"><path d="M3.2 8.8 L7 5 L10.8 8.8" fill="none" stroke="#4d6185" stroke-width="2.1"/></svg></div>
<div class="r" style="left:491px;top:362.2px;width:12.399999999999977px;height:12.400000000000034px;border-radius:2.5px;background:linear-gradient(135deg,#d2defd,#b6c9f7);box-shadow:0 0 0 1px #e6ecfb;"><svg width="12.399999999999977" height="12.400000000000034" viewBox="0 0 14 14" preserveAspectRatio="none" style="position:absolute;left:0;top:0"><path d="M3.2 5.4 L7 9.2 L10.8 5.4" fill="none" stroke="#4d6185" stroke-width="2.1"/></svg></div>
<div class="r" style="left:10.6px;top:378px;width:13.4px;height:12.600000000000023px;border-radius:2.5px;background:linear-gradient(135deg,#d2defd,#b6c9f7);box-shadow:0 0 0 1px #e6ecfb;"><svg width="13.4" height="12.600000000000023" viewBox="0 0 14 14" preserveAspectRatio="none" style="position:absolute;left:0;top:0"><path d="M8.8 3.2 L5 7 L8.8 10.8" fill="none" stroke="#4d6185" stroke-width="2.1"/></svg></div>
<div class="r" style="left:475px;top:378px;width:12.600000000000023px;height:12.399999999999977px;border-radius:2.5px;background:linear-gradient(135deg,#d2defd,#b6c9f7);box-shadow:0 0 0 1px #e6ecfb;"><svg width="12.600000000000023" height="12.399999999999977" viewBox="0 0 14 14" preserveAspectRatio="none" style="position:absolute;left:0;top:0"><path d="M5.4 3.2 L9.2 7 L5.4 10.8" fill="none" stroke="#4d6185" stroke-width="2.1"/></svg></div>
<div class="r" style="left:491px;top:289.6px;width:13.699999999999989px;height:5.699999999999989px;border-radius:2px;background:linear-gradient(to right,#cfdcfd,#bccdf9);box-shadow:0 0 0 1px #e6ecfb;"></div>
<div class="r" style="left:26.5px;top:378px;width:204.0px;height:12.600000000000023px;border-radius:2px;background:linear-gradient(to bottom,#d0dcfd,#bccdf9);box-shadow:0 0 0 1px #e6ecfb;"></div>
<div class="r" style="left:124.5px;top:381.5px;width:1.0px;height:6.0px;background:#eef3ff;"></div>
<div class="r" style="left:125.5px;top:382.5px;width:1.0px;height:6.0px;background:#8ea6e0;"></div>
<div class="r" style="left:126.5px;top:381.5px;width:1.0px;height:6.0px;background:#eef3ff;"></div>
<div class="r" style="left:127.5px;top:382.5px;width:1.0px;height:6.0px;background:#8ea6e0;"></div>
<div class="r" style="left:128.5px;top:381.5px;width:1.0px;height:6.0px;background:#eef3ff;"></div>
<div class="r" style="left:129.5px;top:382.5px;width:1.0px;height:6.0px;background:#8ea6e0;"></div>
<div class="r" style="left:130.5px;top:381.5px;width:1.0px;height:6.0px;background:#eef3ff;"></div>
<div class="r" style="left:131.5px;top:382.5px;width:1.0px;height:6.0px;background:#8ea6e0;"></div>
<div class="r" style="left:5px;top:393px;width:505px;height:1.5px;background:#fff;"></div>
<div class="r" style="left:5px;top:394.5px;width:505px;height:2.5px;background:#2a2a26;"></div>
<div class="r" style="left:5px;top:397px;width:1.4000000000000004px;height:17px;background:#2a2a26;"></div>
<div class="r" style="left:5px;top:413px;width:505px;height:1px;background:#2a2a26;"></div>
<div class="r" style="left:6.4px;top:398px;width:87.6px;height:14.5px;box-sizing:border-box;border:1px solid;border-color:#aca899 #fff #fff #aca899;border-left:0;"></div>
<div class="r" style="left:97px;top:398px;width:87px;height:14.5px;box-sizing:border-box;border:1px solid;border-color:#aca899 #fff #fff #aca899;"></div>
<div class="r" style="left:187px;top:398px;width:321.5px;height:14.5px;box-sizing:border-box;border:1px solid;border-color:#aca899 #fff #fff #aca899;"></div>
<div class="r" style="left:509px;top:397px;width:1px;height:17px;background:#2a2a26;"></div>
<span class="t" style="left:99.00px;top:408px;font:400 11px/0 'DejaVu Sans Condensed',sans-serif;color:#000;letter-spacing:0.409px;">[1:19]</span>
<span class="t" style="left:188.70px;top:408px;font:400 11px/0 'DejaVu Sans Condensed',sans-serif;color:#000;letter-spacing:0.144px;">Готово. Обработано записей: 1000. Время выполнения:</span>
<svg class="r" style="left:496px;top:399px" width="13" height="13" viewBox="0 0 13 13"><path d="M12 1 L1 12 M12 5 L5 12 M12 9 L9 12" stroke="#aca899" stroke-width="1.3"/><path d="M13 1 L2 12 M13 5 L6 12 M13 9 L10 12" stroke="#fff" stroke-width="1" transform="translate(0,1)"/></svg>
<svg class="r" style="left:0;top:0" width="662" height="488" viewBox="0 0 662 488"><g stroke="#000" stroke-width="1.8" fill="none"><path d="M483 39.05 H559.1"/><path d="M481 110.05 H557.6"/><path d="M130.8 259.4 H541.3"/><path d="M462 334.2 H553"/><path d="M143.1 407.7 V468.2" stroke-width="1.9"/><path d="M349 409 V468.8" stroke-width="1.9"/></g></svg>
<span class="t" style="left:558.80px;top:40px;font:400 12.4px/0 'Liberation Sans',sans-serif;color:#1c1c1c;transform:scaleX(0.9109);transform-origin:0 50%;">Панель</span>
<span class="t" style="left:558.50px;top:54px;font:400 12.4px/0 'Liberation Sans',sans-serif;color:#1c1c1c;transform:scaleX(0.9345);transform-origin:0 50%;">инструментов</span>
<span class="t" style="left:560.00px;top:111px;font:400 12.4px/0 'Liberation Sans',sans-serif;color:#1c1c1c;transform:scaleX(0.9168);transform-origin:0 50%;">Поле редактора</span>
<span class="t" style="left:542.80px;top:261px;font:400 12.4px/0 'Liberation Sans',sans-serif;color:#1c1c1c;transform:scaleX(0.9347);transform-origin:0 50%;">Вкладка диагностики</span>
<span class="t" style="left:554.00px;top:336px;font:400 12.4px/0 'Liberation Sans',sans-serif;color:#1c1c1c;transform:scaleX(0.9340);transform-origin:0 50%;">Вкладка результата</span>
<span class="t" style="left:98.50px;top:477px;font:400 12.4px/0 'Liberation Sans',sans-serif;color:#1c1c1c;transform:scaleX(0.9341);transform-origin:0 50%;">Позиция курсора</span>
<span class="t" style="left:306.50px;top:477px;font:400 12.4px/0 'Liberation Sans',sans-serif;color:#1c1c1c;transform:scaleX(0.9306);transform-origin:0 50%;">Краткая диагностика</span>
</div></body></html>
